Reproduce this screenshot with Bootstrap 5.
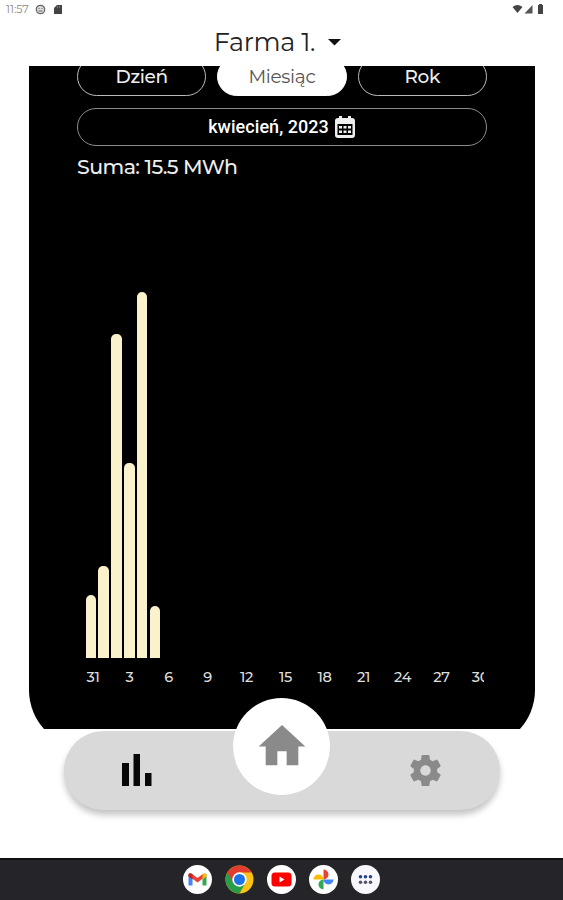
<!DOCTYPE html>
<html lang="pl">
<head>
<meta charset="utf-8">
<meta name="viewport" content="width=device-width, initial-scale=1">
<title>Farma 1.</title>
<link href="https://cdn.jsdelivr.net/npm/bootstrap@5.3.0/dist/css/bootstrap.min.css" rel="stylesheet">
<style>
body{width:563px;height:900px;font-family:Montserrat,Inter,"Open Sans",sans-serif;color:#111;line-height:1}
svg{display:block;flex:none}
.status{height:18px;padding:0 18px 0 6px;font-size:11px;color:#888;font-weight:400}
.status span{width:25px}
.farm{height:48px;font-size:25.500px;font-weight:400;letter-spacing:-.35px;border:0;background:none;padding:0 8px 0 0;color:#222}
.farm svg{margin:0 0 0 13px}
.clip{width:506px;height:663px;margin-left:29px}
.panel{height:682px;border-radius:0 0 58px 58px;padding:0 48px}
.tabs-row{gap:11px;margin-top:-9px}
.pill{height:38.500px;border:1px solid #bbb;border-radius:20px;background:#000;color:#eee;font-size:18.500px;font-weight:500;padding:1px 0 0;line-height:1;letter-spacing:-.3px}
.pill.on{background:#fff;color:#555;border-color:#fff;font-weight:400}
.date{height:38.500px;margin-top:12px;border-color:#8c8c8c;font:500 18px Roboto,sans-serif;letter-spacing:.05px;color:#fff;gap:6px;padding:0 1px 0 0}
.sum{margin-top:10px;height:22px;line-height:21px;font-size:20.500px;color:#eee;letter-spacing:-.55px;font-weight:500}
.chart{height:479.500px;gap:2.500px;padding-left:8.500px}
.bar{width:10.400px;background:#f9f2ca;border-radius:5px 5px 0 0;flex:none}
.axis{height:20px;margin-top:9px;width:407px;font-size:14.500px;color:#ddd;font-weight:500;letter-spacing:-.3px}
.axis span{width:39px;flex:none;text-align:center;line-height:20px}
.axis span:first-child{margin-left:-3.500px;margin-right:-2.500px}
.menu{width:436px;height:79px;margin:2px 0 0 64px;border-radius:40px;background:#d9d9d9;box-shadow:0 5px 6px rgba(0,0,0,.23);padding:0 55px 1px 56px}
.home{width:97px;height:97px;left:233px;top:697.500px}
.dock{height:42px;margin-top:48px;background:#252529;border-top:2px solid #101012;gap:13.200px;padding-bottom:2px}
.app{width:29px;height:29px}
</style>
<script src="https://cdn.jsdelivr.net/npm/bootstrap@5.3.0/dist/js/bootstrap.bundle.min.js"></script>
</head>
<body class="bg-white overflow-hidden position-relative m-0">
<div class="status d-flex align-items-center">
  <span>11:57</span>
  <svg class="ms-1" width="11" height="11" viewBox="0 0 11 11"><circle cx="5.5" cy="5.5" r="4.2" fill="#ddd" stroke="#666" stroke-width="1.3"/><path d="M3.5 4.5h1m2 0h1M3.5 7h4" stroke="#666"/></svg>
  <svg class="ms-2" width="9" height="11" viewBox="0 0 9 11"><path d="M3 1h5v9H0V4z" fill="#444"/><path d="M3.5 2v2M5.5 2v2" stroke="#888" stroke-width=".7"/></svg>
  <svg class="ms-auto" width="33" height="12" viewBox="0 0 33 12"><path d="M.5 4Q5.500 0 10.500 4L5.500 10z" fill="#444"/><path d="M12.500 10.500L20.500 2v8.500z" fill="#555"/><path d="M26 2h1V1h3v1h1v9h-5z" fill="#444"/></svg>
</div>
<button class="farm w-100 d-flex align-items-center justify-content-center"><span>Farma 1.</span><svg width="13" height="7" viewBox="0 0 13 7"><path d="M0 0h13L6.500 6.500z" fill="#111"/></svg></button>
<main class="clip overflow-hidden">
  <div class="panel bg-black d-flow-root overflow-hidden">
    <div class="tabs-row d-flex">
      <button class="pill flex-fill w-100">Dzień</button>
      <button class="pill on flex-fill w-100">Miesiąc</button>
      <button class="pill flex-fill w-100">Rok</button>
    </div>
    <button class="pill date w-100 d-flex align-items-center justify-content-center"><span>kwiecień, 2023</span>
      <svg width="20" height="22" viewBox="0 0 20 22"><path d="M3 2h1V0h3v2h6V0h3v2h1q3 0 3 3v14q0 3-3 3H3q-3 0-3-3V5q0-3 3-3z" fill="#eee"/><path d="M2.500 8h15v11h-15z" fill="#000"/><path d="M4 10h3v2.500H4zm4.500 0h3v2.500h-3zm4.500 0h3v2.500h-3zM4 14.500h3V17H4zm4.500 0h3V17h-3zm4.500 0h3V17h-3z" fill="#eee"/></svg>
    </button>
    <div class="sum">Suma: 15.5 MWh</div>
    <div class="chart d-flex align-items-end">
      <div class="bar" style="height:63px"></div>
      <div class="bar" style="height:92px"></div>
      <div class="bar" style="height:324px"></div>
      <div class="bar" style="height:195px"></div>
      <div class="bar" style="height:366px"></div>
      <div class="bar" style="height:52px"></div>
    </div>
    <div class="axis d-flex overflow-hidden"><span>31</span><span>3</span><span>6</span><span>9</span><span>12</span><span>15</span><span>18</span><span>21</span><span>24</span><span>27</span><span>30</span></div>
  </div>
</main>
<nav class="menu d-flex align-items-center justify-content-between">
  <svg width="34" height="34" viewBox="0 0 34 34"><path d="M2 10h7v23H2zM13.500 1h6.500v32h-6.500zM25 20h6.500v13H25z" fill="#080808"/></svg>
  <svg width="39" height="39" viewBox="0 0 24 24"><path fill="#8a8a8a" d="M19.14 12.94c.04-.3.06-.61.06-.94 0-.32-.02-.64-.07-.94l2.030-1.580c.18-.14.23-.41.12-.61l-1.920-3.320c-.12-.22-.37-.29-.59-.22l-2.390.96c-.5-.38-1.030-.7-1.620-.94l-.36-2.540c-.04-.24-.24-.41-.48-.41h-3.840c-.24 0-.43.17-.47.41l-.36 2.540c-.59.24-1.130.57-1.620.94l-2.390-.96c-.22-.08-.47 0-.59.22L2.740 8.870c-.12.21-.08.47.12.61l2.030 1.580c-.05.3-.09.63-.09.94s.02.64.07.94l-2.030 1.580c-.18.14-.23.41-.12.61l1.920 3.320c.12.22.37.29.59.22l2.390-.96c.5.38 1.030.7 1.620.94l.36 2.540c.05.24.24.41.48.41h3.840c.24 0 .44-.17.47-.41l.36-2.540c.59-.24 1.130-.56 1.620-.94l2.390.96c.22.08.47 0 .59-.22l1.920-3.320c.12-.22.07-.47-.12-.61l-2.010-1.580zM12 15.200c-1.770 0-3.200-1.430-3.200-3.200s1.430-3.200 3.200-3.200 3.200 1.430 3.200 3.200-1.430 3.200-3.200 3.200z"/></svg>
</nav>
<div class="home position-absolute bg-white rounded-circle d-flex align-items-center justify-content-center">
  <svg width="56" height="56" viewBox="0 0 24 24"><path d="M10 20.200v-6h4v6h5v-8h3L12 3 2 12.200h3v8z" fill="#8a8a8a"/></svg>
</div>
<footer class="dock d-flex align-items-center justify-content-center">
  <svg class="app" viewBox="0 0 29 29"><circle cx="14.500" cy="14.500" r="14.500" fill="#fff"/><path d="M5.500 9v11.500h4V12z" fill="#4285f4"/><path d="M23.500 9v11.500h-4V12z" fill="#34a853"/><path d="M5.500 10q0-2.500 3-1.500l6 4.500 6-4.500v4.500l-6 4.500-6-4.500-3-2z" fill="#ea4335"/><path d="M19.500 9.300q3.500-2.300 4 .7v1.500l-4 3z" fill="#fbbc04"/><path d="M5.500 10v1.500l4 3v-5q-3.500-2.500-4 .5z" fill="#c5221f"/></svg>
  <svg class="app" viewBox="0 0 29 29"><circle cx="14.500" cy="14.500" r="14" fill="#fbc116"/><path d="M14.500 14.500L2.400 7.500A14 14 0 0 0 14.500 28.500L20.500 18z" fill="#2a9d4b"/><path d="M14.500 14.500L8.500 18 2.400 7.500A14 14 0 0 1 26.600 7.500H14.500z" fill="#e33b2e"/><circle cx="14.500" cy="14.500" r="7.200" fill="#fff"/><circle cx="14.500" cy="14.500" r="5.500" fill="#1a73e8"/></svg>
  <svg class="app" viewBox="0 0 29 29"><circle cx="14.500" cy="14.500" r="14.500" fill="#fff"/><rect x="4.500" y="7.500" width="20" height="14" rx="3.500" fill="#f00"/><path d="M12.500 11.500v6l5-3z" fill="#fff"/></svg>
  <svg class="app" viewBox="0 0 29 29"><circle cx="14.500" cy="14.500" r="14.500" fill="#fff"/><path d="M14.500 14.500V4.500a5 5 0 0 1 0 10z" fill="#ea4335"/><path d="M14.500 14.500h10a5 5 0 0 1-10 0z" fill="#4285f4"/><path d="M14.500 14.500v10a5 5 0 0 1 0-10z" fill="#34a853"/><path d="M14.500 14.500h-10a5 5 0 0 1 10 0z" fill="#fbbc04"/></svg>
  <svg class="app" viewBox="0 0 29 29"><circle cx="14.500" cy="14.500" r="14.500" fill="#f8f8fc"/><g fill="#24448c"><circle cx="9.500" cy="11.700" r="1.800"/><circle cx="14.500" cy="11.700" r="1.800"/><circle cx="19.500" cy="11.700" r="1.800"/></g><g fill="#55556a"><circle cx="9.500" cy="17.300" r="1.800"/><circle cx="14.500" cy="17.300" r="1.800"/><circle cx="19.500" cy="17.300" r="1.800"/></g></svg>
</footer>
</body>
</html>
